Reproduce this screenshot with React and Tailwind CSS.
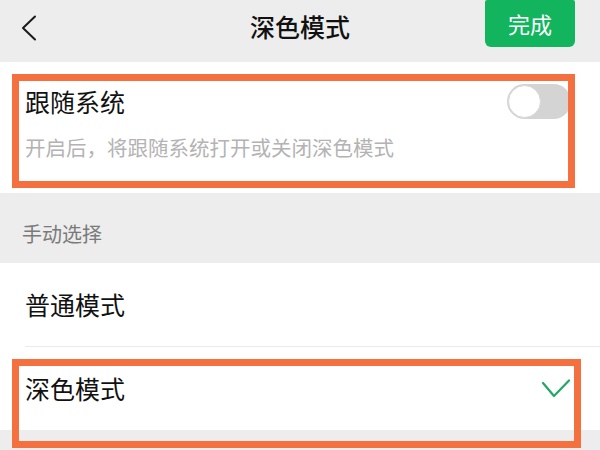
const font = { fontFamily: '"Noto Sans CJK SC", "Noto Sans", sans-serif' }

function Back() {
  return (
    <svg width="18" height="26" viewBox="0 0 18 26" fill="none">
      <path d="M15 1.5 L3 13 L15 24.5" stroke="#1a1a1a" strokeWidth="2" strokeLinecap="round" strokeLinejoin="round" />
    </svg>
  )
}

function Toggle() {
  return (
    <div className="w-[64px] h-[35px] rounded-full bg-[#d4d4d4] p-[1px] flex items-center">
      <div className="w-[33px] h-[33px] rounded-full bg-white border border-[#d6d6d6]" />
    </div>
  )
}

function Check() {
  return (
    <svg width="30" height="20" viewBox="0 0 30 20" fill="none">
      <path d="M2 4 L13 17 L28 1.5" stroke="#22a865" strokeWidth="2.2" strokeLinecap="round" strokeLinejoin="round" />
    </svg>
  )
}

export default function App() {
  return (
    <div className="w-[600px] h-[450px] bg-[#ededed] relative overflow-hidden" style={font}>
      {/* Header */}
      <div className="h-[62px] grid grid-cols-[1fr_auto_1fr]">
        <div className="flex items-center pl-[20px] pb-[6px]">
          <Back />
        </div>
        <div className="flex items-center pb-[8px] text-[25px] font-medium text-[#111]">深色模式</div>
        <div className="flex justify-end items-start pr-[25px]">
          <button className="w-[90px] h-[47px] rounded-b-[6px] rounded-t-[2px] bg-[#12b55e] text-white text-[22px] flex items-center justify-center">
            完成
          </button>
        </div>
      </div>

      {/* Follow system card */}
      <div className="bg-white h-[131px] pl-[25px] pr-[29px] pt-[22px]">
        <div className="flex items-center justify-between h-[35px]">
          <span className="text-[25px] text-[#111] leading-none">跟随系统</span>
          <Toggle />
        </div>
        <div className="mt-[14px] text-[20.5px] text-[#b3b3b3] leading-[28px]">
          开启后，将跟随系统打开或关闭深色模式
        </div>
      </div>

      {/* Section label */}
      <div className="h-[70px] flex items-end pb-[14px] pl-[22px] text-[20px] text-[#7a7a7a]">手动选择</div>

      {/* Options */}
      <div className="bg-white">
        <div className="h-[83px] flex items-center pl-[25px] text-[25px] text-[#111]">普通模式</div>
        <div className="ml-[25px] h-px bg-[#ebebeb]" />
        <div className="h-[83px] flex items-center justify-between pl-[25px] pr-[29px] text-[25px] text-[#111]">
          <span>深色模式</span>
          <Check />
        </div>
      </div>

      {/* Annotation boxes */}
      <div className="absolute left-[12px] top-[74px] w-[563px] h-[114px] border-[7px] border-[#f4703f]" />
      <div className="absolute left-[12px] top-[359px] w-[569px] h-[89px] border-[7px] border-[#f4703f]" />
    </div>
  )
}
